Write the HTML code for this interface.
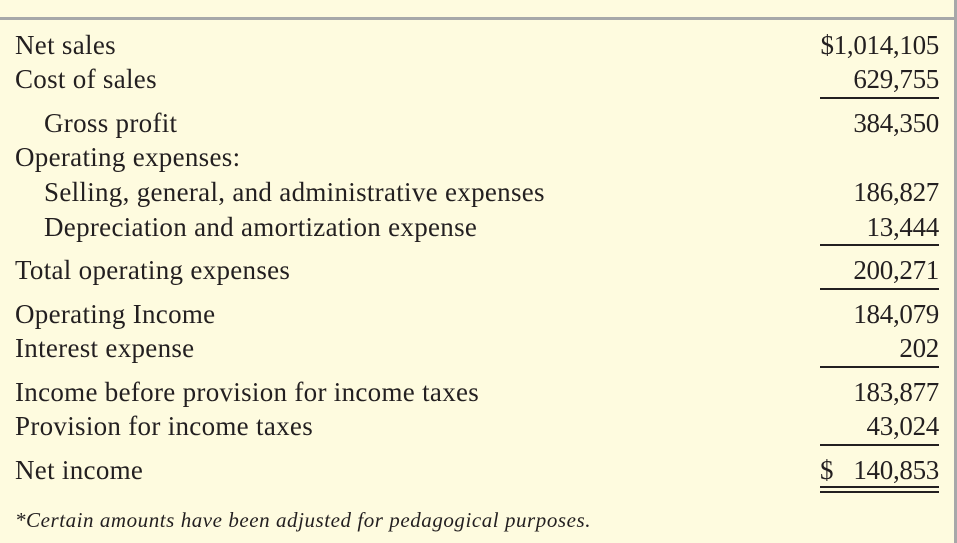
<!DOCTYPE html>
<html><head><meta charset="utf-8"><style>
html,body{margin:0;padding:0;}
body{width:957px;height:543px;background:#fefbdf;position:relative;overflow:hidden;font-family:"Liberation Serif",serif;color:#231f20;}
.t{position:absolute;font-size:27px;line-height:26px;white-space:nowrap;letter-spacing:0.3px;}
.l{left:15px}.i{left:44px}
.n{right:18px;text-align:right;letter-spacing:-0.3px}
.ln{position:absolute;left:820px;width:119px;height:2px;background:#231f20;}
</style></head><body>
<div style="position:absolute;left:0;top:17px;width:957px;height:3px;background:#a7a8a9"></div>
<div style="position:absolute;left:954px;top:0;width:3px;height:543px;background:#a7a8a9"></div>
<div class="t l" style="top:32px">Net sales</div><div class="t n" style="top:32px">$1,014,105</div>
<div class="t l" style="top:66px">Cost of sales</div><div class="t n" style="top:66px">629,755</div>
<div class="ln" style="top:97px"></div>
<div class="t i" style="top:110px">Gross profit</div><div class="t n" style="top:110px">384,350</div>
<div class="t l" style="top:144px">Operating expenses:</div>
<div class="t i" style="top:179px">Selling, general, and administrative expenses</div><div class="t n" style="top:179px">186,827</div>
<div class="t i" style="top:214px">Depreciation and amortization expense</div><div class="t n" style="top:214px">13,444</div>
<div class="ln" style="top:244px"></div>
<div class="t l" style="top:257px">Total operating expenses</div><div class="t n" style="top:257px">200,271</div>
<div class="ln" style="top:288px"></div>
<div class="t l" style="top:301px">Operating Income</div><div class="t n" style="top:301px">184,079</div>
<div class="t l" style="top:335px">Interest expense</div><div class="t n" style="top:335px">202</div>
<div class="ln" style="top:366px"></div>
<div class="t l" style="top:379px">Income before provision for income taxes</div><div class="t n" style="top:379px">183,877</div>
<div class="t l" style="top:413px">Provision for income taxes</div><div class="t n" style="top:413px">43,024</div>
<div class="ln" style="top:444px"></div>
<div class="t l" style="top:457px">Net income</div>
<div class="t" style="top:457px;left:820px">$</div>
<div class="t n" style="top:457px">140,853</div>
<div class="ln" style="top:486px"></div><div class="ln" style="top:491px"></div>
<div class="t l" style="top:507px;font-size:21px;font-style:italic;letter-spacing:0.55px">*Certain amounts have been adjusted for pedagogical purposes.</div>
</body></html>
